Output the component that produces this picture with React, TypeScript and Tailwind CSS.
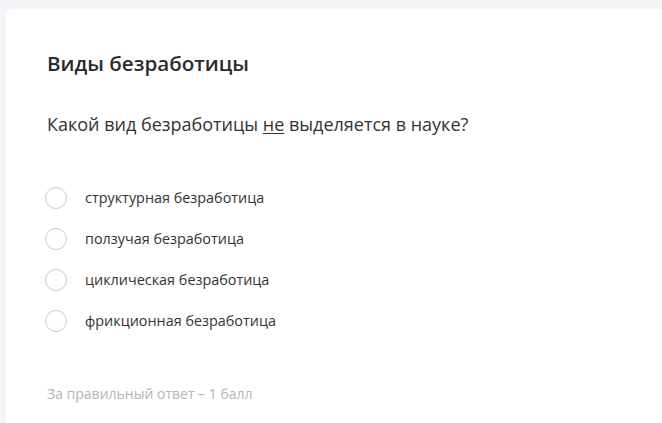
const options = [
  "структурная безработица",
  "ползучая безработица",
  "циклическая безработица",
  "фрикционная безработица",
];

export default function App() {
  return (
    <div
      className="w-[662px] h-[423px] bg-[#f4f5f9] pt-[9px] pl-[6px] overflow-hidden"
      style={{ fontFamily: '"Open Sans", "Liberation Sans", sans-serif' }}
    >
      <div className="h-full bg-white rounded-tl-md pl-[41px] pt-[40px]">
        <h1 className="text-[20.6px] leading-[28px] font-semibold text-[#2b2b2b]">Виды безработицы</h1>
        <p className="mt-[34px] text-[18px] leading-[26px] text-[#333]">
          Какой вид безработицы <span className="underline underline-offset-2">не</span> выделяется в науке?
        </p>
        <div className="mt-[50px] ml-[-2px] flex flex-col gap-[19px]">
          {options.map((o) => (
            <label key={o} className="flex items-center gap-[18px] h-[22px]">
              <span className="w-[22px] h-[22px] rounded-full border border-[#c8c8c8] bg-white shrink-0" />
              <span className="text-[14.4px] text-[#333]">{o}</span>
            </label>
          ))}
        </div>
        <div className="mt-[51px] text-[14px] text-[#b5b5b5]">За правильный ответ – 1 балл</div>
      </div>
    </div>
  );
}
